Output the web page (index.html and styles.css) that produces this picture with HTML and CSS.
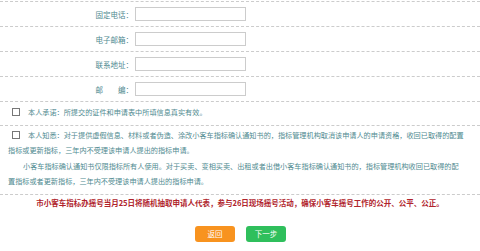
FILE: index.html
```html
<!DOCTYPE html>
<html lang="zh-CN">
<head>
    <meta charset="UTF-8">
    <title>小客车指标申请</title>
    <link rel="stylesheet" href="styles.css">
</head>
<body>
    <div class="page">
        <div class="form-row">
            <label class="form-label" for="phone">固定电话：</label>
            <input class="form-input" type="text" id="phone">
        </div>
        <div class="form-row">
            <label class="form-label" for="email">电子邮箱：</label>
            <input class="form-input" type="text" id="email">
        </div>
        <div class="form-row">
            <label class="form-label" for="address">联系地址：</label>
            <input class="form-input" type="text" id="address">
        </div>
        <div class="form-row">
            <label class="form-label" for="zip">邮　　编：</label>
            <input class="form-input" type="text" id="zip">
        </div>

        <div class="notice short">
            <p><span class="check"></span>本人承诺：所提交的证件和申请表中所填信息真实有效。</p>
        </div>

        <div class="notice">
            <p><span class="check"></span>本人知悉：对于提供虚假信息、材料或者伪造、涂改小客车指标确认通知书的，指标管理机构取消该申请人的申请资格，收回已取得的配置<br>指标或更新指标，三年内不受理该申请人提出的指标申请。</p>
            <p class="indent">小客车指标确认通知书仅限指标所有人使用。对于买卖、变相买卖、出租或者出借小客车指标确认通知书的，指标管理机构收回已取得的配<br>置指标或者更新指标，三年内不受理该申请人提出的指标申请。</p>
        </div>

        <p class="tip">市小客车指标办摇号当月25日将随机抽取申请人代表，参与26日现场摇号活动，确保小客车摇号工作的公开、公平、公正。</p>

        <div class="actions">
            <button class="btn btn-back">返回</button>
            <button class="btn btn-next">下一步</button>
        </div>
    </div>
</body>
</html>
```

FILE: styles.css
```css
/* General */
body {
    margin: 0;
    background: #fff;
    font-family: "Noto Sans CJK SC", sans-serif;
    font-size: 7.5px;
    color: #4f8a90;
}

.page {
    width: 480px;
    padding-top: 1px;
}

/* Form rows */
.form-row {
    display: flex;
    align-items: center;
    height: 24px;
    border-top: 1px dashed #ccc;
}

.form-label {
    width: 133px;
    text-align: right;
}

.form-input {
    box-sizing: border-box;
    width: 111px;
    height: 14px;
    margin: 0 0 0 2px;
    padding: 0;
    border: 1px solid #ccc;
    outline: none;
}

/* Notices */
.notice {
    border-top: 1px dashed #ccc;
    padding: 2px 6px 4px 8px;
    font-size: 7.15px;
}

.notice.short {
    padding: 3px 6px 4px 8px;
}

.notice p {
    margin: 0;
    line-height: 15.5px;
    white-space: nowrap;
}

.notice .indent {
    text-indent: 15px;
}

.check {
    display: inline-block;
    box-sizing: border-box;
    width: 8px;
    height: 8px;
    border: 1px solid #777;
    margin: 0 8px 0 4px;
    vertical-align: -1px;
}

/* Tip */
.tip {
    margin: 0;
    border-top: 1px dashed #ccc;
    padding-top: 1px;
    text-align: center;
    color: #b0242c;
    font-weight: bold;
    font-size: 7.5px;
    line-height: 14px;
}

/* Buttons */
.actions {
    display: flex;
    justify-content: center;
    gap: 11px;
    margin-top: 16px;
    padding-left: 1px;
}

.btn {
    width: 40px;
    height: 16px;
    border: none;
    border-radius: 3px;
    color: #fff;
    font-family: "Noto Sans CJK SC", sans-serif;
    font-size: 7.5px;
    padding: 0;
    cursor: pointer;
}

.btn-back {
    background: #f8931f;
}

.btn-next {
    background: #2fbf5c;
}
```
